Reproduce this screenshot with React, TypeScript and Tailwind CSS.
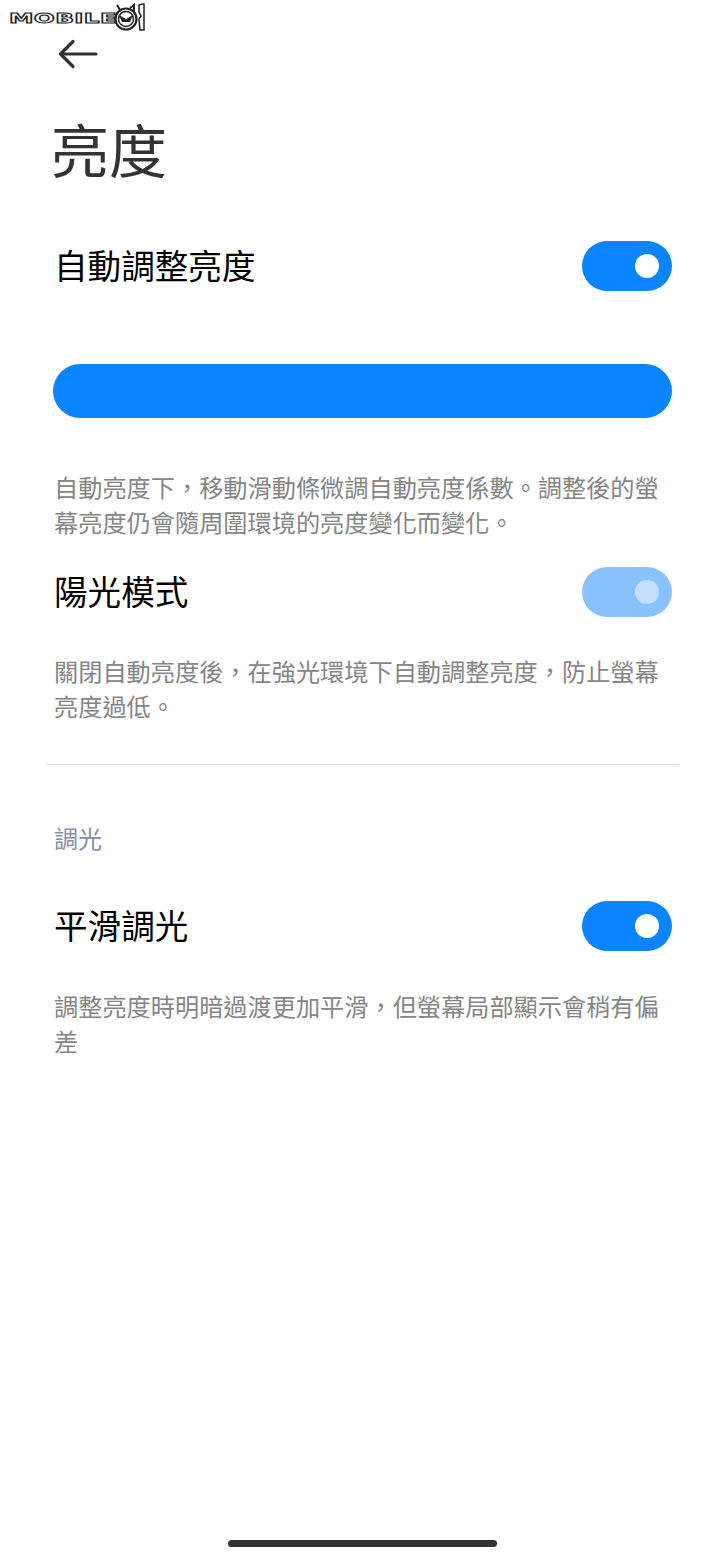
const DESC_AUTO = "自動亮度下\uFF0C移動滑動條微調自動亮度係數。調整後的螢幕亮度仍會隨周圍環境的亮度變化而變化。";
const DESC_SUN = "關閉自動亮度後\uFF0C在強光環境下自動調整亮度\uFF0C防止螢幕亮度過低。";
const DESC_DIM = "調整亮度時明暗過渡更加平滑\uFF0C但螢幕局部顯示會稍有偏差";

function Toggle({ dim = false }: { dim?: boolean }) {
  return (
    <div
      className={
        "flex h-[50px] w-[90px] shrink-0 items-center justify-end rounded-full pr-[13px] " +
        (dim ? "bg-[#8ac2ff]" : "bg-[#0a84ff]")
      }
    >
      <div className={"h-[24px] w-[24px] rounded-full " + (dim ? "bg-[#c4e0ff]" : "bg-white")} />
    </div>
  );
}

function Row({ label, dim }: { label: string; dim?: boolean }) {
  return (
    <div className="flex items-center justify-between pl-[54px] pr-[48px]">
      <span className="-mt-[2px] text-[33.6px] leading-[50px] text-black">{label}</span>
      <Toggle dim={dim} />
    </div>
  );
}

function Desc({ children, className = "" }: { children: string; className?: string }) {
  return (
    <p className={"pl-[54px] pr-[48px] text-[24.2px] leading-[35px] text-[#858585] " + className}>{children}</p>
  );
}

function Logo() {
  return (
    <div className="flex h-[32px] items-start pl-[9px] pt-[3px]">
      <span className="mt-[9px] w-[106px] origin-left scale-x-[1.76] font-['DejaVu_Sans',sans-serif] text-[14px] font-bold leading-[13px] tracking-[0.2px] text-white [-webkit-text-stroke:1px_#222]">
        MOBILE
      </span>
      <svg width="32" height="28" viewBox="0 0 32 28" fill="none" className="-ml-[1px]">
        <circle cx="12" cy="16" r="10.5" fill="#fff" stroke="#222" strokeWidth="2.2" />
        <circle cx="12" cy="16" r="7.5" stroke="#222" strokeWidth="1.5" />
        <path d="M3 2l3 5M16 5l4-3 0 6" stroke="#222" strokeWidth="2" />
        <path d="M5 12l7 4 7-4-3 7H8z" fill="#222" />
        <path d="M25 2l4-1h1v26h-4l-1-11 2-3-2-4z" fill="#fff" stroke="#222" strokeWidth="1.5" />
      </svg>
    </div>
  );
}

export default function App() {
  return (
    <main className="relative h-[1559px] w-[720px] overflow-hidden bg-white font-['Noto_Sans_CJK_TC','Noto_Sans_CJK_SC',sans-serif]">
      <Logo />

      <div className="pl-[58px] pt-[4px]">
        <svg width="42" height="36" viewBox="0 0 42 36" fill="none" stroke="#333" strokeWidth="3.2" strokeLinecap="round" strokeLinejoin="round">
          <path d="M38 18H3" />
          <path d="M15 5.5L2.5 18 15 30.5" />
        </svg>
      </div>

      <h1 className="pl-[51px] pt-[40px] text-[58px] font-normal leading-[72px] text-[#333]">亮度</h1>

      <div className="pt-[57px]">
        <Row label="自動調整亮度" />
      </div>

      <div className="ml-[53px] mr-[48px] mt-[73px] h-[54px] rounded-full bg-[#0a84ff]" />

      <Desc className="mt-[51px]">{DESC_AUTO}</Desc>

      <div className="pt-[28px]">
        <Row label="陽光模式" dim />
      </div>

      <Desc className="mt-[36px]">{DESC_SUN}</Desc>

      <div className="ml-[47px] mr-[41px] mt-[41px] h-px bg-[#dcdcdc]" />

      <p className="pl-[54px] pt-[55px] text-[24px] leading-[35px] text-[#8490a8]">調光</p>

      <div className="pt-[46px]">
        <Row label="平滑調光" />
      </div>

      <Desc className="mt-[37px]">{DESC_DIM}</Desc>

      <div className="absolute bottom-[12px] left-[228px] h-[7px] w-[269px] rounded-full bg-[#333]" />
    </main>
  );
}
